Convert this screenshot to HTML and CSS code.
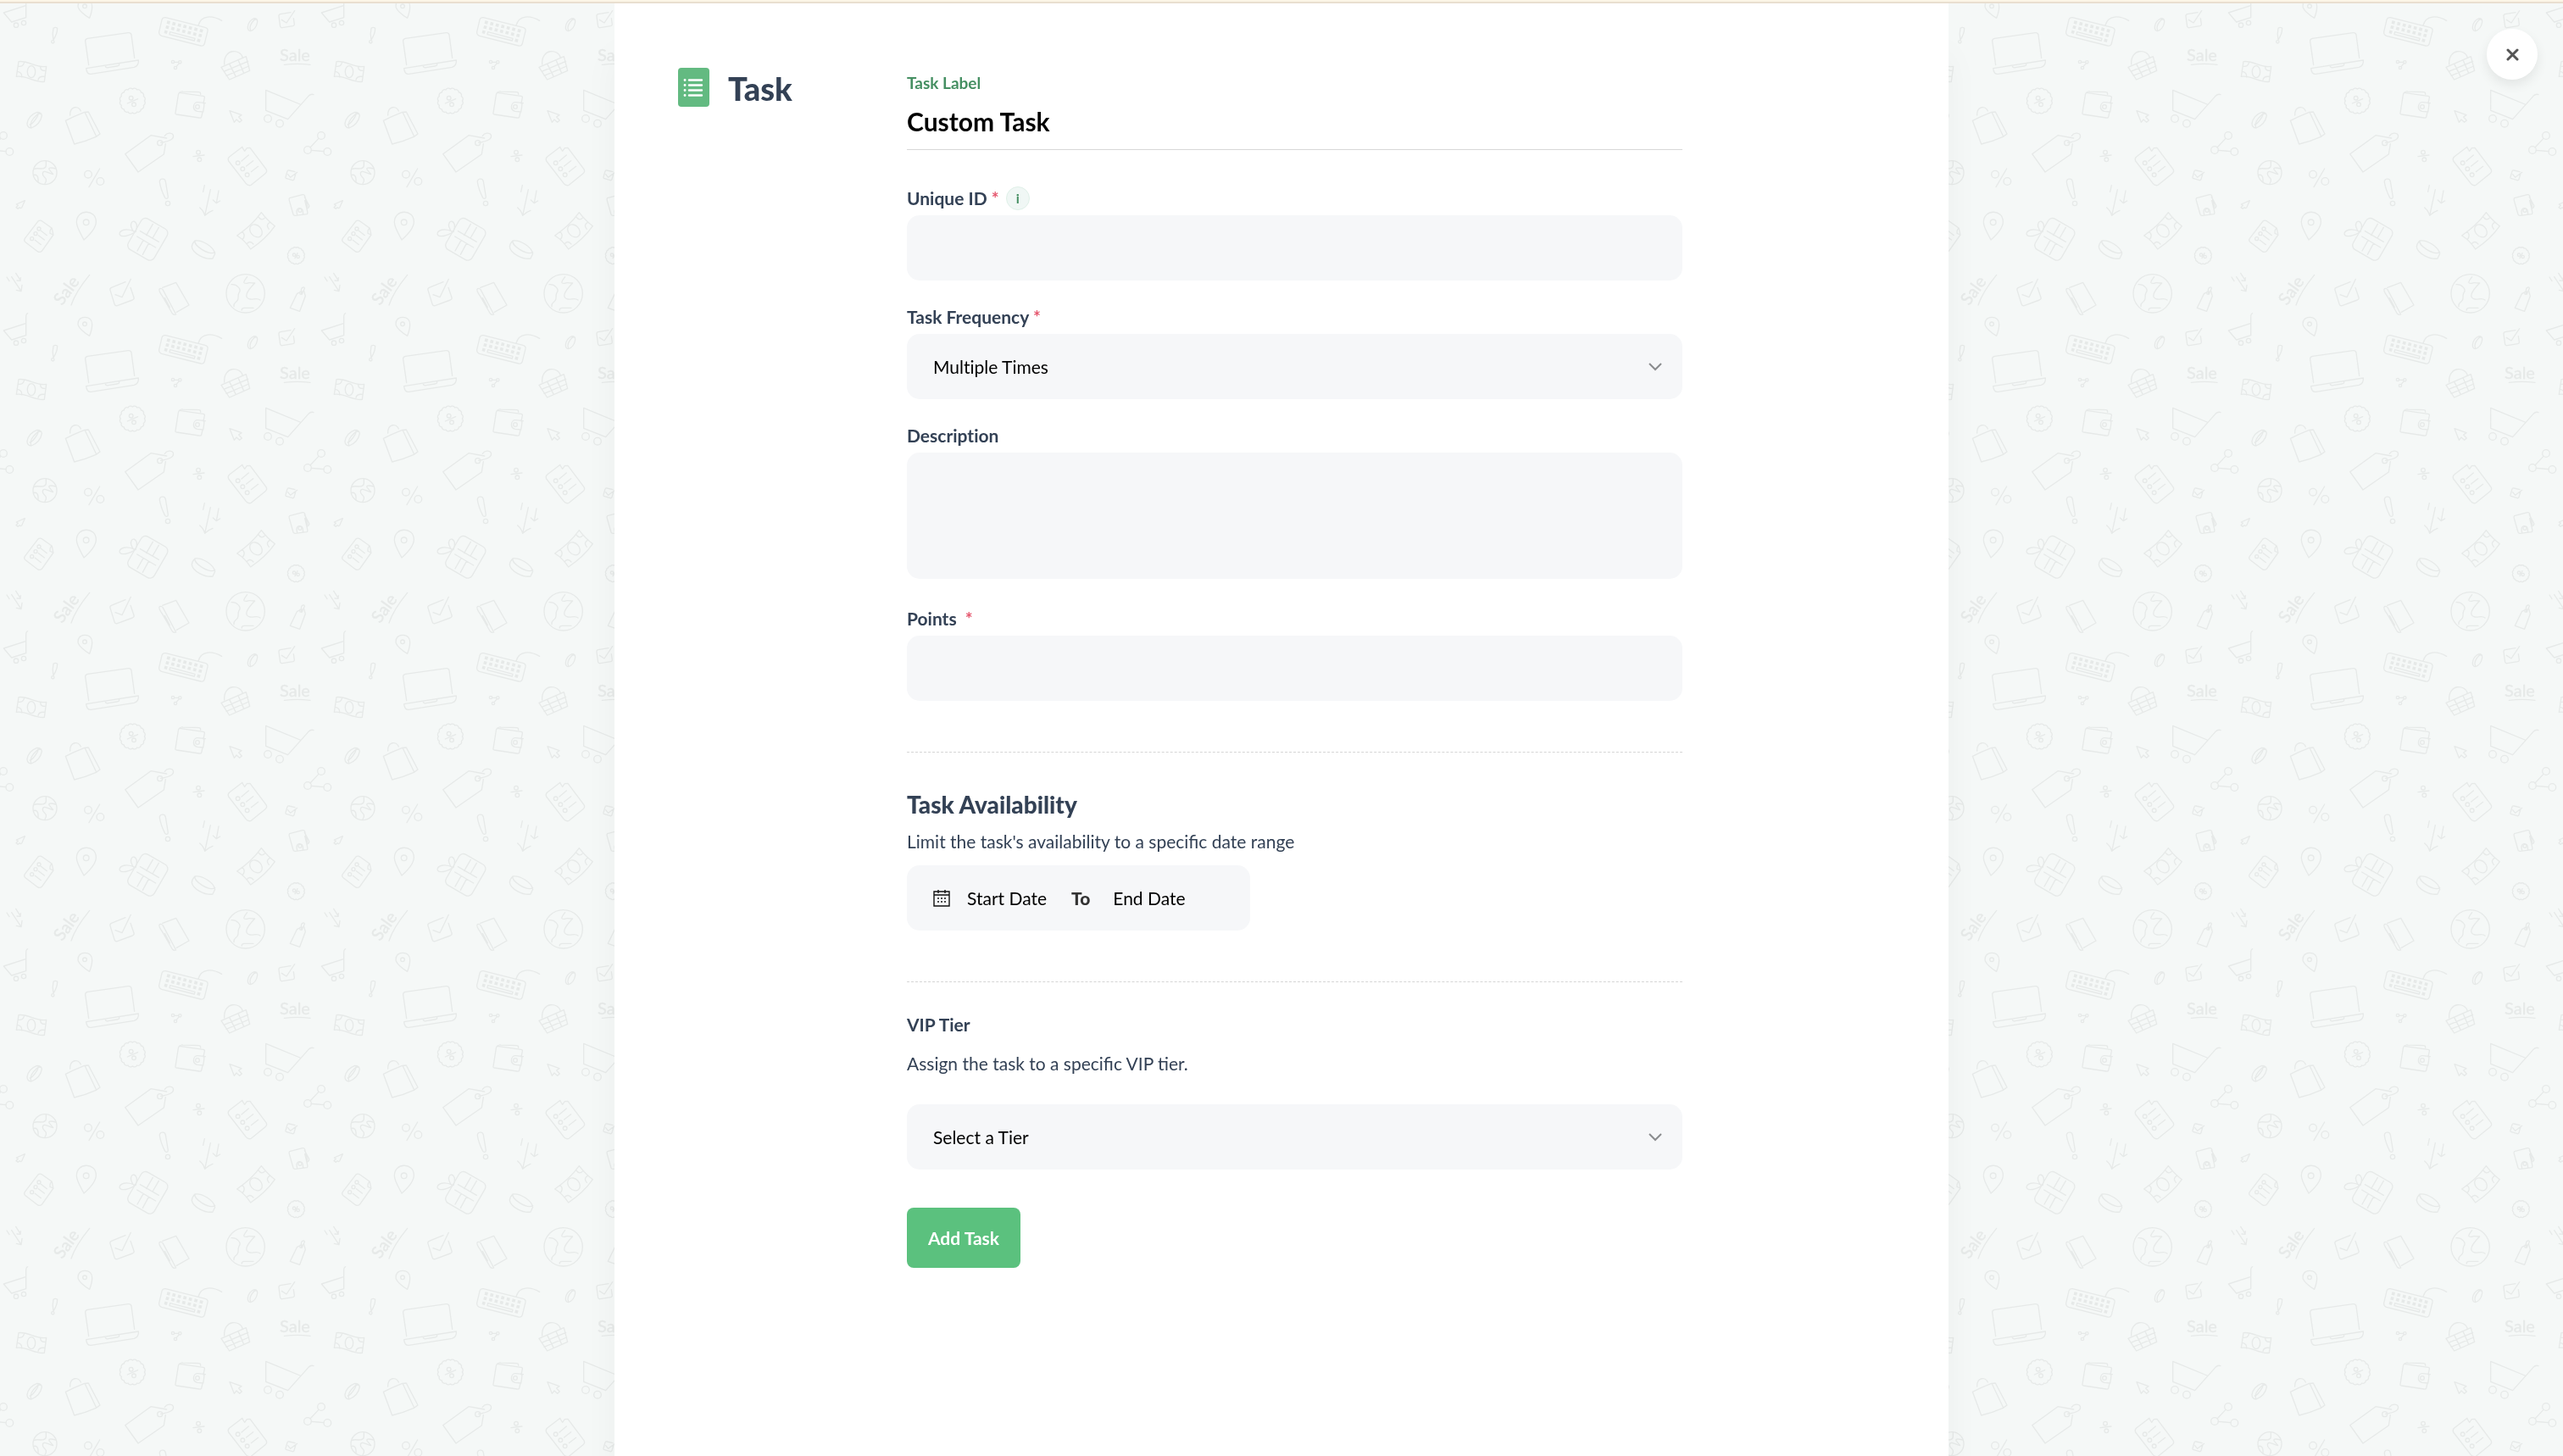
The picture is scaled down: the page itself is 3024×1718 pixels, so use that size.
FILE: index.html
```
<!DOCTYPE html>
<html lang="en">
<head>
<meta charset="utf-8">
<meta name="viewport" content="width=device-width, initial-scale=1">
<title>Custom Task</title>
<link rel="stylesheet" href="styles.css">
</head>

<body>

<svg class="backdrop" aria-hidden="true">
	<defs>
		<g id="doodles">
			<!-- small cart -->
			<path d="M98-16q-6 2-6 14v64L41 78 13 45 91 20"/>
			<circle cx="57" cy="89" r="8"/><circle cx="84" cy="81" r="8"/>
			<!-- small pin -->
			<path d="M317 64Q284 44 277 27C273 8 286-2 300-2c19 0 26 13 26 26q0 16-9 40z"/>
			<circle cx="300" cy="22" r="7"/>
			<!-- exclamation marks -->
			<path d="M189 100q7-6 14 0 0 20-14 41-5-20 0-41z"/><circle cx="187" cy="148" r="5"/>
			<path d="M565 645c-1-14 18-16 21-3l9 55c0 8-9 8-12 1q-14-28-18-53z"/><circle cx="594" cy="720" r="8"/>
			<!-- laptop -->
			<path d="M314 230l-12-84q-1-8 8-10l144-20q9-1 11 7l11 82M305 242l185-29q2 19-15 25l-153 24q-15 2-17-20zM373 235q2 6 10 4l31-5q9-1 8-7"/>
			<!-- keyboard -->
			<path d="M586 62l140 35q11 3 9 13l-11 44q-3 10-13 8L572 127q-10-4-9-14l10-43q3-9 13-8zM702 90c10-38 50-36 83-17M602 113l88 23-2 8-88-22z"/>
			<path class="keys" d="M591 78l127 32M587 95l127 32M582 112l10 3M698 142l11 3"/>
			<!-- coins -->
			<path d="M877 95q3-22 23-30 12 0 11 13-4 25-24 32-11-1-10-15zM887 108q-8-16 12-37 8-5 11-1"/>
			<path d="M96 437q4-28 35-40 16 0 17 13-6 31-37 43-15-1-15-16zM110 452q-8-21 20-45 10-7 15-4M106 441q11-3 26-28 5-9 3-15"/>
			<path d="M679 874q0-11 11-22c25-4 66 21 71 46l-8 17c-25 5-71-17-74-41zM690 852c-6 16 48 53 71 41"/>
			<!-- check boxes -->
			<path d="M1029 44l-37 6q-6 2-5 8l5 36q2 5 7 4l38-6q6-2 5-7l-3-20M997 70l17 11 29-43"/>
			<path d="M1047 613l-6 22q-2 4-6 3l-20-6q-5-1-4-5l6-21q1-4 6-3l21 5M1019 617l9 11 24-18"/>
			<path d="M444 998l-50 20q-6 3-4 9l15 49q2 8 10 6l54-20q7-3 5-9l-12-35M408 1043l24 9 31-64"/>
			<!-- banknotes -->
			<path d="M66 218c34-5 63 24 98 17l-7 54c-31 6-65-24-99-18zM85 223q-4 14-20 12M62 253q17 3 15 20M143 238q1 14 19 12M135 283q2-14 22-12"/>
			<ellipse cx="111" cy="254" rx="14" ry="21"/>
			<path d="M839 834q53-36 86-82 22 29 48 48-32 46-86 82-20-31-48-48zM914 767q12 18 25 2M955 787q-16 10-3 24M858 820q13 14 0 28M873 864q11-15 24 0"/>
			<ellipse cx="906" cy="817" rx="19" ry="25" transform="rotate(-43 906 817)"/>
			<!-- share -->
			<circle cx="612" cy="219" r="5"/><circle cx="637" cy="220" r="5"/><circle cx="621" cy="240" r="5"/><path d="M617 220h15M634 224l-10 12"/>
			<circle cx="1137" cy="480" r="13"/><circle cx="1089" cy="531" r="13"/><circle cx="1159" cy="537" r="13"/><path d="M1128 490l-30 32M1102 532l44 4"/>
			<!-- basket -->
			<path d="M794 228c-3-58 57-56 65-24M783 238l88-38 13 50-72 32zM792 253l86-36M801 268l80-34M812 226l23 46M843 212l20 47"/>
			<!-- percent badges -->
			<path d="M511 357a10 10 0 0 1-3 16a10 10 0 0 1-9 14a10 10 0 0 1-14 9a10 10 0 0 1-16 3a10 10 0 0 1-16-3a10 10 0 0 1-14-9a10 10 0 0 1-9-14a10 10 0 0 1-3-16a10 10 0 0 1 3-16a10 10 0 0 1 9-14a10 10 0 0 1 14-9a10 10 0 0 1 16-3a10 10 0 0 1 16 3a10 10 0 0 1 14 9a10 10 0 0 1 9 14a10 10 0 0 1 3 16z"/>
			<circle cx="464" cy="347" r="7"/><circle cx="474" cy="370" r="7"/><path d="M451 366l37-16"/>
			<path d="M1076 905a7 7 0 0 1-2 11a7 7 0 0 1-6 9a7 7 0 0 1-9 6a7 7 0 0 1-11 2a7 7 0 0 1-11-2a7 7 0 0 1-9-6a7 7 0 0 1-6-9a7 7 0 0 1-2-11a7 7 0 0 1 2-11a7 7 0 0 1 6-9a7 7 0 0 1 9-6a7 7 0 0 1 11-2a7 7 0 0 1 11 2a7 7 0 0 1 9 6a7 7 0 0 1 6 9a7 7 0 0 1 2 11z"/>
			<circle cx="1041" cy="902" r="5"/><circle cx="1055" cy="909" r="5"/><path d="M1044 914l9-18"/>
			<circle cx="312" cy="617" r="13"/><circle cx="355" cy="642" r="13"/><path d="M353 597l-38 65"/>
			<circle cx="702" cy="539" r="7"/><circle cx="706" cy="565" r="7"/><path d="M684 554l39-5"/>
			<!-- wallets -->
			<path d="M720 366l4-20q1-5-5-6l-84-12q6-5 12-4l58 2q5 0 5 8M635 328q-3 1-4 8l-10 64q-1 4 4 5l80 12q7 1 8-3l4-17M727 365l-26-3c-18-2-23 28-2 32l20 2q3-14 4-31"/><circle cx="699" cy="378" r="7"/>
			<path d="M1025 701l46-12q6-1 8 5l9 38M1025 701q-3 2-1 9l14 49q2 5 8 4l40-5q4-1 2-10l-9-38M1078 697l16 31q1 7-6 10M1052 762l-2-14c1-16 21-14 22 1l1 11"/><circle cx="1062" cy="745" r="6"/>
			<!-- shopping bag -->
			<path d="M248 408c-1-34 30-35 38-15M232 427q31-16 67-30l14-1 41 78-14 10q-38 17-77 26zM300 397l41 86"/>
			<!-- pointers -->
			<path d="M813 392l42 15-10 7 11 12-8 7-11-10-8 10z"/><path d="M88 710l-30 13 6 4-7 7 7 5 5-5 4 3 4-2z"/>
			<!-- cart -->
			<path d="M1110 335q-9-4-18 5l-73 82-78-31V319l121 50"/><circle cx="948" cy="420" r="13"/><circle cx="990" cy="437" r="13"/>
			<!-- price tag -->
			<path d="M590 489l-56-10-91 66 46 64 91-63 6-37M569 505c35-6 48-14 44-27-4-10-23-8-30 3"/><circle cx="566" cy="506" r="9"/>
			<!-- check lists -->
			<path d="M858 520l-46 35q-7 6-3 15l62 80q7 9 18 5l50-41q8-6 3-15l-57-76-11 1-8 11-9-14zM855 570l25-21M872 588l24-19M889 608l25-19"/><circle cx="842" cy="577" r="7"/><circle cx="859" cy="598" r="7"/><circle cx="875" cy="619" r="7"/>
			<path d="M184 808l-36-26q-8-4-14 2l-46 60q-5 8 3 14l42 32q8 5 15-1l41-58-12-5q-1-15 7-18zM188 828l-4-19M145 817l21 16M136 833l21 16M124 850l21 16"/><circle cx="138" cy="810" r="6"/><circle cx="126" cy="827" r="6"/><circle cx="113" cy="845" r="6"/>
			<!-- globes -->
			<circle cx="159" cy="611" r="42"/><path d="M163 570v16q-1 12-21 11-14-2-22 2M197 597c-16-4-28-5-22 4l13 16c-14-2-36-20-37-2-1 14 22 13 8 35M120 619q14-2 15 15v10"/>
			<circle cx="869" cy="1039" r="68"/><path d="M875 980c-20 26-10 23-1 23 9-5 18 0 28-1-30 30-40 52-17 57 12 3 23-7 36 3M819 1007c20-2 37 18 27 29-8 18 5 22-13 35-6 5-5 11-5 14M856 1098q-2-7 9-8h32"/>
			<!-- arrows -->
			<path d="M745 671l-20 92M707 735q14 12 18 28 13-13 28-18M774 675l-8 44M754 708l12 11 13-8M724 656l-5 23"/>
			<path d="M41 980l34 51M58 1027l17 4 3-22M56 967l16 25M60 993l12 1 1-11M24 981l9 14"/>
			<!-- pin -->
			<path d="M297 849c-12-23-26-44-26-62 0-48 69-48 69-2 0 21-17 41-43 64z"/><circle cx="305" cy="787" r="10"/>
			<!-- gift -->
			<rect x="470" y="784" width="106" height="126" rx="18" transform="rotate(30 523 847)"/>
			<path d="M496 818l66 38M485 837l66 39M541 793l-23 40M562 805l-22 38M507 851l-21 37M526 862l-21 39M478 820c-66-30-79 45-2 3-28-30-2-55 8-28q2 12-4 26"/>
			<!-- book -->
			<path d="M575 1018l48-18 46 80-44 25M565 1022c-5 4 3 17 10 27l35 61q6 6 13 3l-47-88q-5-6-11-3zM583 1054l18 34"/>
			<!-- small tag -->
			<path d="M1066 1032l-15 8-24 50 34 12 20-54-5-18M1066 1039c15-14 14-24 7-22-8 1-8 12-5 22"/><circle cx="1066" cy="1037" r="5"/>
			<!-- sale -->
			<text x="990" y="217">Sale</text><path d="M1006 229q47-6 92 0"/>
			<text x="220" y="1084" transform="rotate(-54 220 1084)">Sale</text><path d="M252 1080q15-46 65-107"/>
		</g>
		<pattern id="tile" width="1125" height="1125" patternUnits="userSpaceOnUse" patternTransform="scale(.333333)">
			<use href="#doodles"/>
			<use href="#doodles" x="-1125"/>
			<use href="#doodles" y="1125"/>
		</pattern>
	</defs>
	<rect class="fill" width="100%" height="100%" fill="url(#tile)"/>
</svg>

<div class="topbar"></div>

<button type="button" class="close" aria-label="Close">
	<svg width="15" height="15" viewBox="0 0 15 15"><path d="M2 2l11 11M13 2L2 13"/></svg>
</button>

<div class="panel">
	<div class="panel_side">
		<svg class="task_icon" width="37" height="46" viewBox="0 0 37 46">
			<rect width="37" height="46" rx="4" fill="#63ba81"/>
			<path d="M13 14.5h15M13 20.5h15M13 26.5h15M13 32.5h15" stroke="#fff" stroke-width="2.4" stroke-linecap="round"/>
			<path d="M8 14.5h.1M8 20.5h.1M8 26.5h.1M8 32.5h.1" stroke="#fff" stroke-width="2.8" stroke-linecap="round"/>
		</svg>
		<h1>Task</h1>
	</div>

	<form class="panel_form">
		<div class="title_field">
			<label for="task_label">Task Label</label>
			<input type="text" id="task_label" value="Custom Task">
		</div>

		<div class="field">
			<div class="field_head">
				<label for="unique_id">Unique ID <span class="req">*</span></label>
				<button type="button" class="info">i</button>
			</div>
			<input type="text" id="unique_id" class="control">
		</div>

		<div class="field">
			<div class="field_head">
				<label for="frequency">Task Frequency <span class="req">*</span></label>
			</div>
			<div class="select_wrap">
				<select id="frequency" class="control">
					<option>Multiple Times</option>
				</select>
				<svg width="18" height="10" viewBox="0 0 18 10"><path d="M2 1l7 7 7-7"/></svg>
			</div>
		</div>

		<div class="field">
			<div class="field_head">
				<label for="description">Description</label>
			</div>
			<textarea id="description" class="control"></textarea>
		</div>

		<div class="field">
			<div class="field_head">
				<label for="points">Points&nbsp; <span class="req">*</span></label>
			</div>
			<input type="text" id="points" class="control">
		</div>

		<section class="availability">
			<h2>Task Availability</h2>
			<p>Limit the task's availability to a specific date range</p>
			<div class="date_range control">
				<svg width="20" height="20" viewBox="0 0 20 20">
					<path d="M1 2h18v17H1zM1 6h18M6 0v4M14 0v4" fill="none" stroke="#111" stroke-width="1.4"/>
					<path d="M5 10h10M5 14h10" fill="none" stroke="#111" stroke-width="1.6" stroke-dasharray="2 2"/>
				</svg>
				<input type="text" aria-label="Start Date" placeholder="Start Date">
				<b>To</b>
				<input type="text" aria-label="End Date" placeholder="End Date">
			</div>
		</section>

		<section class="tier">
			<label for="tier">VIP Tier</label>
			<p>Assign the task to a specific VIP tier.</p>
			<div class="select_wrap">
				<select id="tier" class="control">
					<option>Select a Tier</option>
				</select>
				<svg width="18" height="10" viewBox="0 0 18 10"><path d="M2 1l7 7 7-7"/></svg>
			</div>
		</section>

		<button type="submit" class="submit">Add Task</button>
	</form>
</div>

</body>
</html>
```

FILE: styles.css
```
*{ margin: 0; padding: 0; box-sizing: border-box;}
html,
body{
	min-height: 100vh;
}
body{
	display: flex;
	flex-direction: column;
	background: #f5f8f7;
	color: #334155;
	font: 21px/28px Lato, "Liberation Sans", sans-serif;
}
input,
select,
textarea,
button{
	border: 0;
	outline: 0;
	font: inherit;
}
button{
	cursor: pointer;
}
label,
select{
	font-variant-ligatures: none;
}

/* background pattern */
.backdrop{
	position: fixed;
	top: 0;
	left: 0;
	z-index: -1;
	width: 100%;
	height: 100%;
	fill: none;
	stroke: #e6e9e8;
	stroke-width: 4;
	stroke-linecap: round;
	stroke-linejoin: round;
}
.backdrop .fill{
	stroke: none;
}
.backdrop .keys{
	stroke-width: 11;
	stroke-linecap: butt;
	stroke-dasharray: 11 9;
}
.backdrop text{
	fill: #e6e9e8;
	stroke-width: 1;
	font-size: 60px;
	font-weight: 400;
}

.topbar{
	height: 4px;
	background: #fcf5e6;
	border-bottom: 2px solid #e9dfd0;
}
.close{
	position: fixed;
	top: 34px;
	right: 30px;
	display: flex;
	align-items: center;
	justify-content: center;
	width: 60px;
	height: 60px;
	border-radius: 50%;
	background: #fff;
	box-shadow: 0 6px 14px rgba(0,0,0,.08);
}
.close svg{
	fill: none;
	stroke: #555;
	stroke-width: 3;
	stroke-linecap: round;
}

/* panel */
.panel{
	display: flex;
	flex: 1;
	width: 100%;
	max-width: 1574px;
	margin: 0 auto;
	padding: 76px 75px 0;
	background: #fff;
	box-shadow: 0 60px 40px rgba(0,0,0,.04);
}
.panel_side{
	display: flex;
	align-items: flex-start;
	flex: 0 0 270px;
	gap: 22px;
}
.panel_side h1{
	font-size: 38px;
	font-weight: 900;
	line-height: 48px;
}
.panel_form{
	flex: 1;
	max-width: 915px;
}

.title_field{
	margin-bottom: 43px;
	padding-top: 4px;
	border-bottom: 1px solid #d8d8d8;
}
.title_field label{
	display: block;
	color: #458f62;
	font-size: 19px;
	font-weight: 700;
	line-height: 28px;
}
.title_field input{
	display: block;
	width: 100%;
	height: 64px;
	padding-bottom: 2px;
	background: none;
	color: #000;
	font-size: 30px;
	font-weight: 700;
}

.field{
	margin-bottom: 29px;
}
.field_head{
	display: flex;
	align-items: center;
	gap: 8px;
	margin-bottom: 6px;
}
.field_head label,
.tier label{
	font-weight: 700;
}
.req{
	color: #e5566d;
}
.info{
	width: 28px;
	height: 28px;
	border: 1px solid #dff0e8;
	border-radius: 50%;
	background: #f0f7f5;
	color: #458f62;
	font-size: 16px;
	font-weight: 700;
	line-height: 24px;
}
.control{
	display: block;
	width: 100%;
	height: 77px;
	padding: 0 31px;
	border-radius: 15px;
	background: #f6f7f9;
	color: #000;
}
textarea.control{
	height: 149px;
	margin-bottom: 33px;
	padding: 20px 31px;
	resize: none;
}
.select_wrap{
	position: relative;
}
.select_wrap select{
	appearance: none;
}
.select_wrap svg{
	position: absolute;
	top: 34px;
	right: 23px;
	fill: none;
	stroke: #8a8c8e;
	stroke-width: 2;
	pointer-events: none;
}

.availability,
.tier{
	border-top: 1px dashed #d5d5d5;
}
.availability{
	margin-top: 60px;
	padding-top: 43px;
}
.availability h2{
	font-size: 28px;
	font-weight: 900;
	line-height: 36px;
}
.availability p{
	margin: 12px 0 14px;
}
.date_range{
	display: flex;
	align-items: center;
	width: 405px;
}
.date_range input{
	width: 97px;
	margin-left: 20px;
	background: none;
}
.date_range input::placeholder{
	color: #000;
	opacity: 1;
}
.date_range b{
	margin: 0 7px 0 26px;
	color: #333;
	font-weight: 900;
}

.tier{
	margin-top: 60px;
	padding-top: 36px;
}
.tier label{
	display: block;
}
.tier p{
	margin: 18px 0 34px;
}

.submit{
	margin-top: 45px;
	padding: 0 25px;
	height: 71px;
	border-radius: 8px;
	background: #5bc17e;
	color: #fff;
	font-weight: 700;
}
```
